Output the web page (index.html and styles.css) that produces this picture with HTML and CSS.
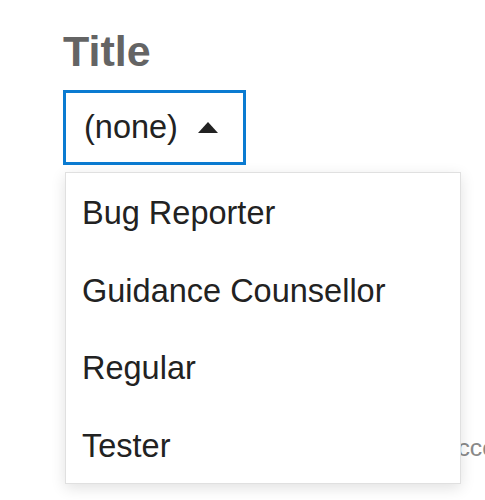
FILE: index.html
```html
<!DOCTYPE html>
<html>
<head>
<meta charset="utf-8">
<link rel="stylesheet" href="styles.css">
</head>
<body>
<div class="page">
  <h2 class="label">Title</h2>
  <div class="select-wrap">
    <div class="select">
      <span class="value">(none)</span>
      <svg class="caret" width="20" height="11" viewBox="0 0 20 11"><path d="M10 0 L20 11 L0 11 Z" fill="#222"/></svg>
    </div>
    <ul class="menu">
      <li class="item">Bug Reporter</li>
      <li class="item">Guidance Counsellor</li>
      <li class="item">Regular</li>
      <li class="item">Tester</li>
    </ul>
  </div>
  <p class="note">Shown next to your name on your account</p>
</div>
</body>
</html>
```
FILE: styles.css
```css
html, body {
  margin: 0;
  padding: 0;
  background: #fff;
  overflow: hidden;
}
body {
  width: 485px;
  height: 500px;
  font-family: "Liberation Sans", Arial, sans-serif;
}
.page {
  padding: 27px 0 0 63px;
  display: flex;
  flex-direction: column;
  align-items: flex-start;
}
.label {
  margin: 0 0 15px 0;
  font-size: 43px;
  line-height: 48px;
  font-weight: bold;
  color: #646464;
}
.select-wrap {
  position: relative;
}
.select {
  box-sizing: border-box;
  width: 183px;
  height: 75px;
  display: inline-flex;
  align-items: center;
  justify-content: space-between;
  padding: 0 25px 0 18px;
  border: 3px solid #0b7bd1;
  background: #fff;
}
.value {
  font-size: 32.5px;
  color: #222;
}
.caret {
  display: block;
}
.menu {
  position: absolute;
  left: 2px;
  top: 82px;
  width: 396px;
  box-sizing: border-box;
  margin: 0;
  padding: 0;
  list-style: none;
  background: #fff;
  border: 1px solid #e0e0e0;
  box-shadow: 0 4px 14px rgba(0, 0, 0, 0.12);
  z-index: 2;
}
.item {
  box-sizing: border-box;
  height: 77.5px;
  display: flex;
  align-items: center;
  padding: 4px 0 0 16px;
  font-size: 32.5px;
  color: #222;
}
.note {
  margin: 269px 0 0 3px;
  font-size: 24.8px;
  line-height: 28px;
  color: #8a8a8a;
  white-space: nowrap;
}
```
